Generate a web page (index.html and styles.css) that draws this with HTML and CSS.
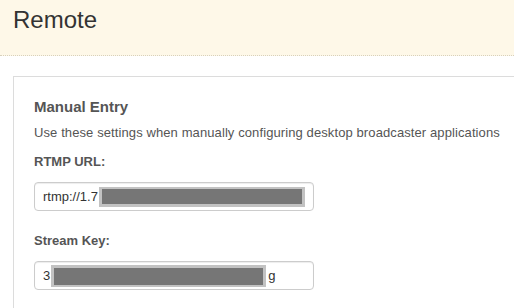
FILE: index.html
```html
<!DOCTYPE html>
<html lang="en">
<head>
    <meta charset="UTF-8">
    <meta name="viewport" content="width=device-width, initial-scale=1.0">
    <title>Remote</title>
    <link rel="stylesheet" href="styles.css">
</head>
<body>
    <div class="page-header">
        <h1>Remote</h1>
    </div>
    <div class="panel">
        <h2>Manual Entry</h2>
        <p class="help">Use these settings when manually configuring desktop broadcaster applications</p>

        <div class="field">
            <label>RTMP URL:</label>
            <div class="input">
                <span>rtmp://1.7</span><span class="redact redact-url"></span>
            </div>
        </div>

        <div class="field">
            <label>Stream Key:</label>
            <div class="input">
                <span>3</span><span class="redact redact-key"></span><span>g</span>
            </div>
        </div>
    </div>
</body>
</html>
```

FILE: styles.css
```css
body {
    font-family: "Liberation Sans", Arial, sans-serif;
    margin: 0;
    height: 100vh;
    display: flex;
    flex-direction: column;
    overflow: hidden;
    background: #fff;
    color: #555;
}
.page-header {
    background-color: #fef8e8;
    height: 55px;
    flex-shrink: 0;
    padding-left: 13px;
    border-bottom: 1px dotted #d8d1bc;
}
.page-header h1 {
    margin: 0;
    padding-top: 6px;
    font-size: 24px;
    line-height: 28px;
    font-weight: normal;
    color: #333;
}
/* the panel runs on past the right and bottom edge of the window */
.panel {
    flex: 1;
    margin: 20px 0 0 13px;
    border: 1px solid #dcdcdc;
    border-right: none;
    border-bottom: none;
    padding: 21px 0 0 20px;
}
.panel h2 {
    margin: 0;
    font-size: 15px;
    line-height: 18px;
    font-weight: bold;
    color: #555;
}
.help {
    margin: 9px 0 0 0;
    font-size: 13px;
    line-height: 16px;
    letter-spacing: 0.1px;
    white-space: nowrap;
}
.field {
    margin-top: 13px;
}
.field + .field {
    margin-top: 22px;
}
.field label {
    display: block;
    font-size: 13px;
    line-height: 16px;
    font-weight: bold;
    color: #555;
    margin-bottom: 12px;
}
.input {
    display: flex;
    align-items: center;
    box-sizing: border-box;
    width: 280px;
    height: 29px;
    padding: 0 8px;
    border: 1px solid #ccc;
    border-radius: 4px;
    box-shadow: inset 0 1px 1px rgba(0, 0, 0, 0.075);
    font-size: 13px;
    color: #333;
}
.redact {
    display: inline-block;
    background-color: #767676;
    border-style: solid;
    border-color: #c2c2c2;
}
.redact-url {
    width: 201px;
    height: 15px;
    margin-left: 1px;
    border-width: 2px 3px 3px 3px;
}
.redact-key {
    width: 209px;
    height: 17px;
    margin: 0 2px 0 1px;
    border-width: 3px 3px 2px 3px;
}
```
